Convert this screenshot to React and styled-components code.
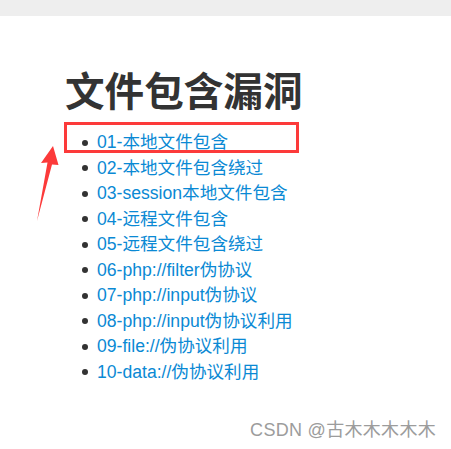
import React from "react";
import styled, {createGlobalStyle} from "styled-components";

const GlobalStyle = createGlobalStyle`
  html, body {
    margin: 0;
    padding: 0;
    background: #fff;
  }
  body {
    font-family: "Liberation Sans", "Noto Sans CJK SC", sans-serif;
  }
`;

const Page = styled.div`
  position: relative;
  display: flex;
  flex-direction: column;
  width: 451px;
  height: 449px;
  overflow: hidden;
  background: #fff;
`;

const TopBar = styled.div`
  flex: none;
  height: 16px;
  background: #eeeeee;
`;

const Content = styled.main`
  display: flex;
  flex-direction: column;
  gap: 18px;
  padding: 56px 0 0 65px;
`;

const Title = styled.h1`
  margin: 0;
  font-size: 39.6px;
  line-height: 40px;
  font-weight: 700;
  color: #333;
`;

const List = styled.ul`
  display: flex;
  flex-direction: column;
  list-style: none;
  margin: 0;
  padding: 0 0 0 17px;
`;

const Item = styled.li`
  display: flex;
  align-items: center;
  gap: 9px;
  font-size: 17.6px;
  line-height: 25.5px;
`;

const Bullet = styled.span`
  flex: none;
  width: 6px;
  height: 6px;
  border-radius: 50%;
  background: #333;
`;

const Link = styled.a`
  color: #0a89d4;
  text-decoration: none;
`;

const Highlight = styled.div`
  position: absolute;
  left: 64px;
  top: 122px;
  width: 235px;
  height: 31px;
  box-sizing: border-box;
  border: 3px solid #fc3a3a;
`;

const Arrow = styled.svg`
  position: absolute;
  left: 30px;
  top: 140px;
`;

const Watermark = styled.div`
  position: absolute;
  right: 15px;
  bottom: 7px;
  font-size: 18px;
  line-height: 24px;
  letter-spacing: 0.3px;
  color: #9c9c9c;
  white-space: nowrap;
`;

const items = [
  "01-本地文件包含",
  "02-本地文件包含绕过",
  "03-session本地文件包含",
  "04-远程文件包含",
  "05-远程文件包含绕过",
  "06-php://filter伪协议",
  "07-php://input伪协议",
  "08-php://input伪协议利用",
  "09-file://伪协议利用",
  "10-data://伪协议利用",
];

export default function App() {
  return (
    <Page>
      <GlobalStyle />
      <TopBar />
      <Content>
        <Title>文件包含漏洞</Title>
        <List>
          {items.map((t) => (
            <Item key={t}>
              <Bullet />
              <Link href="#">{t}</Link>
            </Item>
          ))}
        </List>
      </Content>
      <Highlight />
      <Arrow width="35" height="85" viewBox="0 0 35 85">
        <polygon
          points="23,6 11,23 17.5,22.5 7,81 22,24.5 28.5,25"
          fill="#fc3a3a"
        />
      </Arrow>
      <Watermark>CSDN @古木木木木木</Watermark>
    </Page>
  );
}
